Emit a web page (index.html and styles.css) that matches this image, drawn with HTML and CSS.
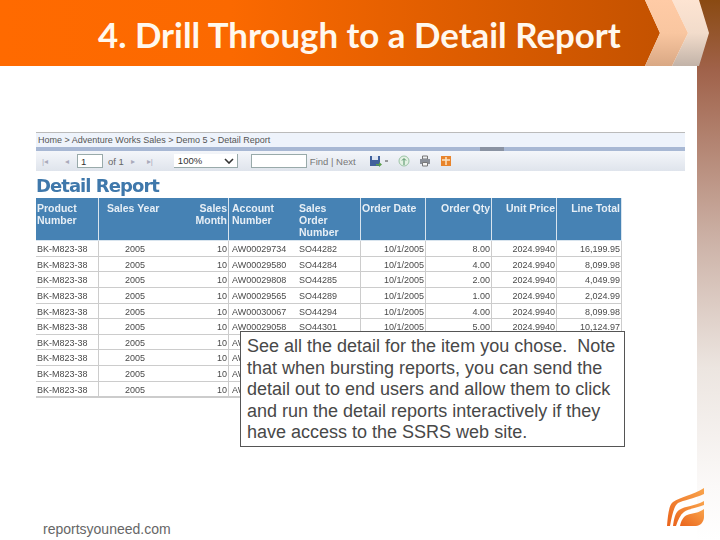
FILE: index.html
```html
<!DOCTYPE html>
<html lang="en">
<head>
  <meta charset="UTF-8" />
  <title>4. Drill Through to a Detail Report</title>
  <link rel="stylesheet" href="styles.css">
</head>
<body>
  <div class="slide">
    <div class="side-strip"></div>

    <header class="banner">
      <h1>4. Drill Through to a Detail Report</h1>
    </header>
    <svg class="chevrons" width="66" height="66" viewBox="0 0 66 66">
      <defs>
        <linearGradient id="chevA" x1="0" y1="0" x2="0" y2="1">
          <stop offset="0" stop-color="#ffcba6" />
          <stop offset="0.5" stop-color="#f9c6a0" />
          <stop offset="1" stop-color="#d9a884" />
        </linearGradient>
        <linearGradient id="chevB" x1="0" y1="0" x2="0" y2="1">
          <stop offset="0" stop-color="#fde4d2" />
          <stop offset="0.5" stop-color="#f2dccb" />
          <stop offset="1" stop-color="#c2b3a8" />
        </linearGradient>
      </defs>
      <path d="M28 0H55L65 33 55 66H28L44 33Z" fill="url(#chevB)" />
      <path d="M1 0H28L44 33 28 66H1L16 33Z" fill="url(#chevA)" />
    </svg>

    <section class="report">
      <div class="crumbs">Home &gt; Adventure Works Sales &gt; Demo 5 &gt; Detail Report</div>
      <div class="splitter"><span class="grip"></span></div>
      <div class="toolbar">
        <span class="nav-glyph">|◂</span>
        <span class="nav-glyph">◂</span>
        <span class="page-box">1</span>
        <span>of 1</span>
        <span class="nav-glyph fwd">▸</span>
        <span class="nav-glyph fwd">▸|</span>
        <span class="zoom-box">100%<svg width="10" height="6" viewBox="0 0 10 6"><path d="M1 1l4 4 4-4" fill="none" stroke="#333" stroke-width="1.6" /></svg></span>
        <span class="find-box"></span>
        <span class="find-links">Find | Next</span>
        <svg class="tool save" width="20" height="13" viewBox="0 0 20 13">
          <path d="M1 1h10v10H1z" fill="#41619c" />
          <path d="M3 1h6v4H3z" fill="#dfe6f2" />
          <path d="M7 9h3V7l3 2.500-3 2.500v-1.500H7z" fill="#5a9e4c" />
          <path d="M16 6h3" stroke="#444" stroke-width="1" />
        </svg>
        <svg class="tool" width="12" height="12" viewBox="0 0 12 12">
          <circle cx="6" cy="6" r="5" fill="#e4f1e4" stroke="#9cc4a6" />
          <path d="M6 10V4M4 5.500L6 3.500l2 2" fill="none" stroke="#4c8f62" />
        </svg>
        <svg class="tool" width="12" height="12" viewBox="0 0 12 12">
          <path d="M3.500 1h5v3h-5z" fill="#eef0f3" stroke="#777" />
          <path d="M1 4h10v5H1z" fill="#8a8f98" />
          <path d="M3.500 7.500h5v3.500h-5z" fill="#f4f4f4" stroke="#777" />
        </svg>
        <svg class="tool" width="12" height="12" viewBox="0 0 12 12">
          <path d="M1 1h10v10H1z" fill="#e8842c" />
          <path d="M2 5h8M6 2v8" stroke="#fbe3c2" stroke-width="1.500" />
        </svg>
      </div>

      <h2>Detail Report</h2>

      <div class="grid">
        <div class="cell head">Product<br>Number</div>
        <div class="cell head year open">Sales Year</div>
        <div class="cell head num">Sales<br>Month</div>
        <div class="cell head acct open">Account<br>Number</div>
        <div class="cell head order">Sales<br>Order<br>Number</div>
        <div class="cell head">Order Date</div>
        <div class="cell head num">Order Qty</div>
        <div class="cell head num">Unit Price</div>
        <div class="cell head num">Line Total</div>

        <div class="cell">BK-M823-38</div><div class="cell mid open">2005</div><div class="cell num">10</div><div class="cell acct open">AW00029734</div><div class="cell order">SO44282</div><div class="cell num">10/1/2005</div><div class="cell num">8.00</div><div class="cell num">2024.9940</div><div class="cell num">16,199.95</div>
        <div class="cell">BK-M823-38</div><div class="cell mid open">2005</div><div class="cell num">10</div><div class="cell acct open">AW00029580</div><div class="cell order">SO44284</div><div class="cell num">10/1/2005</div><div class="cell num">4.00</div><div class="cell num">2024.9940</div><div class="cell num">8,099.98</div>
        <div class="cell">BK-M823-38</div><div class="cell mid open">2005</div><div class="cell num">10</div><div class="cell acct open">AW00029808</div><div class="cell order">SO44285</div><div class="cell num">10/1/2005</div><div class="cell num">2.00</div><div class="cell num">2024.9940</div><div class="cell num">4,049.99</div>
        <div class="cell">BK-M823-38</div><div class="cell mid open">2005</div><div class="cell num">10</div><div class="cell acct open">AW00029565</div><div class="cell order">SO44289</div><div class="cell num">10/1/2005</div><div class="cell num">1.00</div><div class="cell num">2024.9940</div><div class="cell num">2,024.99</div>
        <div class="cell">BK-M823-38</div><div class="cell mid open">2005</div><div class="cell num">10</div><div class="cell acct open">AW00030067</div><div class="cell order">SO44294</div><div class="cell num">10/1/2005</div><div class="cell num">4.00</div><div class="cell num">2024.9940</div><div class="cell num">8,099.98</div>
        <div class="cell">BK-M823-38</div><div class="cell mid open">2005</div><div class="cell num">10</div><div class="cell acct open">AW00029058</div><div class="cell order">SO44301</div><div class="cell num">10/1/2005</div><div class="cell num">5.00</div><div class="cell num">2024.9940</div><div class="cell num">10,124.97</div>
        <div class="cell">BK-M823-38</div><div class="cell mid open">2005</div><div class="cell num">10</div><div class="cell acct stub open">AW</div><div class="cell"></div><div class="cell"></div><div class="cell"></div><div class="cell"></div><div class="cell"></div>
        <div class="cell">BK-M823-38</div><div class="cell mid open">2005</div><div class="cell num">10</div><div class="cell acct stub open">AW</div><div class="cell"></div><div class="cell"></div><div class="cell"></div><div class="cell"></div><div class="cell"></div>
        <div class="cell">BK-M823-38</div><div class="cell mid open">2005</div><div class="cell num">10</div><div class="cell acct stub open">AW</div><div class="cell"></div><div class="cell"></div><div class="cell"></div><div class="cell"></div><div class="cell"></div>
        <div class="cell">BK-M823-38</div><div class="cell mid open">2005</div><div class="cell num">10</div><div class="cell acct stub open">AW</div><div class="cell"></div><div class="cell"></div><div class="cell"></div><div class="cell"></div><div class="cell"></div>
      </div>
    </section>

    <aside class="callout">See all the detail for the item you chose.&nbsp; Note that when bursting reports, you can send the detail out to end users and allow them to click and run the detail reports interactively if they have access to the SSRS web site.</aside>

    <footer class="foot">
      <span class="site">reportsyouneed.com</span>
      <svg class="logo" width="38" height="39" viewBox="0 0 38 39">
        <defs>
          <linearGradient id="logoFill" x1="0" y1="1" x2="1" y2="0">
            <stop offset="0" stop-color="#ea641c" />
            <stop offset="1" stop-color="#f9a44c" />
          </linearGradient>
        </defs>
        <path d="M0 38C1 26 2 17 6 14 13 9 26 7 37 0V6C26 11 17 12 11 15 7 18 5 27 3 38Z" fill="url(#logoFill)" />
        <path d="M6 38C7 31 8 25 12 22 18 18 28 18 37 13V17C29 20 21 21 17 24 13 27 11 32 9 38Z" fill="url(#logoFill)" />
        <path d="M13 38C14 33 16 29 20 27 26 25 32 25 37 21V29C37 34 33 38 29 38Z" fill="url(#logoFill)" />
      </svg>
    </footer>
  </div>
</body>
</html>
```

FILE: styles.css
```css
* { box-sizing: border-box; margin: 0; padding: 0; }
html, body { width: 720px; height: 540px; overflow: hidden; background: #fff; }

.slide {
  position: relative;
  width: 720px;
  height: 540px;
  display: flex;
  flex-direction: column;
  background: #fff;
  font-family: "Liberation Sans", Arial, sans-serif;
}

/* brown strip down the right edge */
.side-strip {
  position: absolute;
  top: 0;
  right: 0;
  width: 23px;
  height: 100%;
  background: linear-gradient(to bottom, #8a4a12 0%, #a0624a 13%, #cdb3a8 45%, #ece5e0 68%, #fbf9f8 90%, #fff 100%);
}

.banner {
  position: relative;
  flex: none;
  width: 661px;
  height: 66px;
  padding: 3px 0 0 98px;
  display: flex;
  align-items: center;
  background: linear-gradient(to right, #ff6a00 0%, #fb6900 35%, #c45200 100%);
  clip-path: polygon(0 0, 645px 0, 660px 33px, 645px 66px, 0 66px);
}
.banner h1 {
  font-family: Lato, sans-serif;
  font-size: 34.85px;
  font-weight: 700;
  color: #fff8ee;
  white-space: nowrap;
}

.chevrons {
  position: absolute;
  top: 0;
  left: 644px;
}

.report {
  position: relative;
  width: 649px;
  margin: 66px 0 0 36px;
  font-size: 9.5px;
  color: #444;
  filter: blur(0.35px);
}
.crumbs {
  height: 15px;
  padding-left: 2px;
  line-height: 14px;
  border-top: 1px solid #bbb;
  background: #eef3fb;
  font-size: 9px;
  color: #555;
}
.splitter {
  height: 4px;
  display: flex;
  justify-content: flex-end;
  background: #a8b8d4;
}
.grip { width: 24px; height: 4px; margin-right: 181px; background: #8a93a3; }
.toolbar {
  height: 20px;
  display: flex;
  align-items: center;
  background: linear-gradient(to bottom, #f4f6fa, #dfe4ec);
  color: #666;
}
.nav-glyph { width: 10px; margin-left: 4px; font-size: 8px; color: #aab; text-align: center; }
.nav-glyph + .nav-glyph { margin-left: 12px; }
.nav-glyph.fwd { margin-left: 4px; }
.nav-glyph.fwd + .nav-glyph.fwd { margin-left: 7px; }
.page-box {
  width: 26px;
  height: 14px;
  margin: 0 5px;
  padding-left: 3px;
  line-height: 13px;
  background: #fff;
  border: 1px solid #9aa;
  color: #333;
}
.zoom-box {
  width: 64px;
  height: 14px;
  margin-left: 19px;
  padding: 0 3px 0 4px;
  display: flex;
  align-items: center;
  justify-content: space-between;
  background: #fff;
  border-right: 1px solid #9aa;
  border-bottom: 1px solid #9aa;
  color: #333;
}
.find-box {
  width: 56px;
  height: 14px;
  margin-left: 13px;
  background: #fff;
  border: 1px solid #9aa;
}
.find-links { margin-left: 3px; color: #777; }
.tool { margin-left: 9px; }
.tool.save { margin-left: 13px; margin-right: 0; }

.report h2 {
  margin-top: 5px;
  height: 22px;
  line-height: 20px;
  font-family: "DejaVu Sans", sans-serif;
  font-size: 18px;
  font-weight: 700;
  color: #3f78ab;
  letter-spacing: -0.95px;
}

.grid {
  width: 586px;
  display: grid;
  grid-template-columns: 63px 65px 65px 66px 66px 65px 66px 65px 65px;
  grid-template-rows: 43px;
  grid-auto-rows: 15.65px;
  border-bottom: 1px solid #ccc;
}
.cell {
  padding: 0 1px;
  font-size: 9px;
  line-height: 16px;
  color: #4a4a4a;
  white-space: nowrap;
  border-right: 1px solid #ccc;
  border-bottom: 1px solid #ccc;
  overflow: hidden;
}
.cell.open { border-right: 0; }
.cell.head {
  padding-top: 4px;
  background: #4682b4;
  color: #e6eef5;
  font-weight: 700;
  font-size: 10.5px;
  line-height: 12px;
  border-color: #d8e4ee;
}
.cell.head.year { padding-left: 8px; }
.cell.acct { padding-left: 3px; }
.cell.order { padding-left: 4px; }
.num { text-align: right; }
.mid { text-align: center; padding-left: 8px; }

.callout {
  position: absolute;
  left: 240px;
  top: 331px;
  width: 385px;
  height: 116px;
  padding: 4px 6px 0;
  background: #fff;
  border: 1px solid #555;
  font-size: 18px;
  line-height: 21.5px;
  color: #484848;
}

.foot {
  position: relative;
  margin-top: auto;
  height: 60px;
  padding: 0 15px 3px 43px;
  display: flex;
  justify-content: space-between;
  align-items: flex-end;
}
.site { font-size: 14px; color: #666; }
.logo { margin-bottom: 10px; }
```
